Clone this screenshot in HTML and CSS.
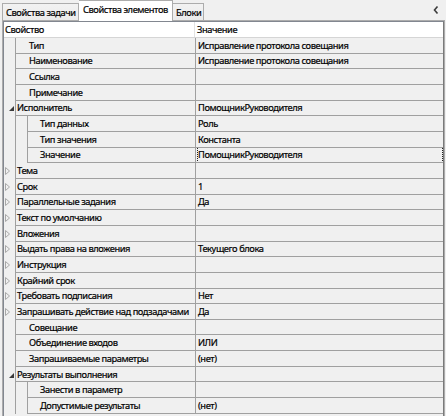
FILE: index.html
```html
<!DOCTYPE html>
<html lang="ru">
<head>
<meta charset="utf-8">
<link rel="stylesheet" href="styles.css">
</head>
<body>
<div class="window">
  <div class="tabstrip">
    <div class="tab t1">Свойства задачи</div>
    <div class="tab t2 active">Свойства элементов</div>
    <div class="tab t3">Блоки</div>
    <div class="spacer"></div>
    <svg class="chev" width="6" height="8" viewBox="0 0 6 8"><polyline points="4.5,0.5 1.5,4 4.5,7.5" fill="none" stroke="#3c3c3c" stroke-width="1.6"/></svg>
  </div>
  <div class="panel">
    <div class="grid">
      <div class="head"><div class="hname">Свойство</div><div class="hval">Значение</div></div>

      <div class="row l1"><div class="gutter"></div><div class="left"><div class="name">Тип</div></div><div class="val">Исправление протокола совещания</div></div>
      <div class="row l1"><div class="gutter"></div><div class="left"><div class="name">Наименование</div></div><div class="val">Исправление протокола совещания</div></div>
      <div class="row l1"><div class="gutter"></div><div class="left"><div class="name">Ссылка</div></div><div class="val"></div></div>
      <div class="row l1"><div class="gutter"></div><div class="left"><div class="name">Примечание</div></div><div class="val"></div></div>

      <div class="row l0"><div class="gutter"><svg class="exp" width="5" height="5" viewBox="0 0 5 5"><polygon points="5,0 5,5 0,5" fill="#3a3a3a"/></svg></div><div class="left"><div class="name">Исполнитель</div></div><div class="val">ПомощникРуководителя</div></div>
      <div class="row l2"><div class="gutter"></div><div class="left"><div class="indent"></div><div class="name">Тип данных</div></div><div class="val">Роль</div></div>
      <div class="row l2"><div class="gutter"></div><div class="left"><div class="indent"></div><div class="name">Тип значения</div></div><div class="val">Константа</div></div>
      <div class="row l2"><div class="gutter"></div><div class="left"><div class="indent"></div><div class="name">Значение</div></div><div class="val focus">ПомощникРуководителя</div></div>

      <div class="row l0"><div class="gutter"><svg class="col" width="5" height="8" viewBox="0 0 5 8"><polygon points="0.5,0.5 4.5,4 0.5,7.5" fill="none" stroke="#a8a8a8" stroke-width="1"/></svg></div><div class="left"><div class="name">Тема</div></div><div class="val"></div></div>
      <div class="row l0"><div class="gutter"><svg class="col" width="5" height="8" viewBox="0 0 5 8"><polygon points="0.5,0.5 4.5,4 0.5,7.5" fill="none" stroke="#a8a8a8" stroke-width="1"/></svg></div><div class="left"><div class="name">Срок</div></div><div class="val">1</div></div>
      <div class="row l0"><div class="gutter"><svg class="col" width="5" height="8" viewBox="0 0 5 8"><polygon points="0.5,0.5 4.5,4 0.5,7.5" fill="none" stroke="#a8a8a8" stroke-width="1"/></svg></div><div class="left"><div class="name">Параллельные задания</div></div><div class="val">Да</div></div>
      <div class="row l0"><div class="gutter"><svg class="col" width="5" height="8" viewBox="0 0 5 8"><polygon points="0.5,0.5 4.5,4 0.5,7.5" fill="none" stroke="#a8a8a8" stroke-width="1"/></svg></div><div class="left"><div class="name">Текст по умолчанию</div></div><div class="val"></div></div>
      <div class="row l0"><div class="gutter"><svg class="col" width="5" height="8" viewBox="0 0 5 8"><polygon points="0.5,0.5 4.5,4 0.5,7.5" fill="none" stroke="#a8a8a8" stroke-width="1"/></svg></div><div class="left"><div class="name">Вложения</div></div><div class="val"></div></div>
      <div class="row l0"><div class="gutter"><svg class="col" width="5" height="8" viewBox="0 0 5 8"><polygon points="0.5,0.5 4.5,4 0.5,7.5" fill="none" stroke="#a8a8a8" stroke-width="1"/></svg></div><div class="left"><div class="name">Выдать права на вложения</div></div><div class="val">Текущего блока</div></div>
      <div class="row l0"><div class="gutter"><svg class="col" width="5" height="8" viewBox="0 0 5 8"><polygon points="0.5,0.5 4.5,4 0.5,7.5" fill="none" stroke="#a8a8a8" stroke-width="1"/></svg></div><div class="left"><div class="name">Инструкция</div></div><div class="val"></div></div>
      <div class="row l0"><div class="gutter"><svg class="col" width="5" height="8" viewBox="0 0 5 8"><polygon points="0.5,0.5 4.5,4 0.5,7.5" fill="none" stroke="#a8a8a8" stroke-width="1"/></svg></div><div class="left"><div class="name">Крайний срок</div></div><div class="val"></div></div>
      <div class="row l0"><div class="gutter"><svg class="col" width="5" height="8" viewBox="0 0 5 8"><polygon points="0.5,0.5 4.5,4 0.5,7.5" fill="none" stroke="#a8a8a8" stroke-width="1"/></svg></div><div class="left"><div class="name">Требовать подписания</div></div><div class="val">Нет</div></div>
      <div class="row l0"><div class="gutter"><svg class="col" width="5" height="8" viewBox="0 0 5 8"><polygon points="0.5,0.5 4.5,4 0.5,7.5" fill="none" stroke="#a8a8a8" stroke-width="1"/></svg></div><div class="left"><div class="name">Запрашивать действие над подзадачами</div></div><div class="val">Да</div></div>

      <div class="row l1"><div class="gutter"></div><div class="left"><div class="name">Совещание</div></div><div class="val"></div></div>
      <div class="row l1"><div class="gutter"></div><div class="left"><div class="name">Объединение входов</div></div><div class="val">ИЛИ</div></div>
      <div class="row l1"><div class="gutter"></div><div class="left"><div class="name">Запрашиваемые параметры</div></div><div class="val">(нет)</div></div>

      <div class="row l0"><div class="gutter"><svg class="exp" width="5" height="5" viewBox="0 0 5 5"><polygon points="5,0 5,5 0,5" fill="#3a3a3a"/></svg></div><div class="left"><div class="name">Результаты выполнения</div></div><div class="val"></div></div>
      <div class="row l2"><div class="gutter"></div><div class="left"><div class="indent"></div><div class="name">Занести в параметр</div></div><div class="val"></div></div>
      <div class="row l2"><div class="gutter"></div><div class="left"><div class="indent"></div><div class="name">Допустимые результаты</div></div><div class="val">(нет)</div></div>
    </div>
  </div>
</div>
</body>
</html>
```

FILE: styles.css
```css
html, body {
  margin: 0;
  padding: 0;
  background: #f0f0f0;
}
body {
  width: 446px;
  height: 416px;
  overflow: hidden;
  font-family: "Noto Sans", "Open Sans", sans-serif;
  font-size: 9.3px;
  letter-spacing: -0.42px;
  color: #000;
  -webkit-text-stroke: 0.2px #000;
}
.window {
  display: flex;
  flex-direction: column;
  height: 416px;
}
.tabstrip {
  display: flex;
  align-items: flex-end;
  height: 20px;
  padding-left: 2px;
  padding-right: 7px;
  position: relative;
  z-index: 2;
}
.tab {
  box-sizing: border-box;
  height: 17px;
  border: 1px solid #acacac;
  border-bottom: none;
  background: linear-gradient(#f2f2f2, #ebebeb);
  padding-left: 3px;
  display: flex;
  align-items: center;
  white-space: nowrap;
}
.t1 { width: 77px; }
.t2 { width: 94px; border-left: none; }
.t3 { width: 31px; border-left: none; }
.tab.active {
  height: 21px;
  margin-bottom: -1px;
  background: #fff;
  padding-left: 4px;
  padding-bottom: 3px;
}
.spacer { flex: 1; }
.chev {
  align-self: center;
  margin-bottom: 1px;
}
.panel {
  margin-left: 2px;
  width: 443px;
  box-sizing: border-box;
  border: 1px solid #acacac;
  border-bottom: none;
  flex: 1;
  background: #fff;
  display: flex;
  flex-direction: column;
}
.grid {
  flex: 1;
  border: 1px solid #828790;
  border-bottom: none;
  border-right-color: #7a7a7a;
  background: #f0f0f0;
  overflow: hidden;
}
.head {
  display: flex;
  height: 16px;
  box-sizing: border-box;
  background: #fff;
  border-bottom: 1px solid #d5d5d5;
  align-items: center;
}
.hname {
  width: 191px;
  box-sizing: border-box;
  padding-left: 1px;
  height: 100%;
  display: flex;
  align-items: center;
  border-right: 1px solid #e3e3e3;
}
.hval {
  padding-left: 2px;
}
.row {
  display: flex;
  height: 15.67px;
}
.gutter {
  width: 12px;
  flex: none;
  box-sizing: border-box;
  border-right: 1px solid #a0a0a0;
  display: flex;
  align-items: center;
}
.left {
  width: 180px;
  flex: none;
  display: flex;
}
.indent {
  width: 12px;
  flex: none;
  box-sizing: border-box;
  border-right: 1px solid #a0a0a0;
}
.name, .val {
  box-sizing: border-box;
  border-bottom: 1px solid #a0a0a0;
  display: flex;
  align-items: center;
  white-space: nowrap;
  overflow: hidden;
}
.name {
  flex: 1;
  border-right: 1px solid #a0a0a0;
  padding-left: 1px;
}
.l1 .name { padding-left: 13px; }
.l2 .name { padding-left: 12px; }
.val {
  flex: 1;
  padding-left: 2px;
}
.focus {
  position: relative;
}
.focus::after {
  content: "";
  position: absolute;
  left: 1px;
  right: 0;
  top: -1px;
  bottom: -1px;
  border: 1px dotted #222;
}
.exp { margin-left: 5px; margin-top: 1px; }
.col { margin-left: 1px; }
```
